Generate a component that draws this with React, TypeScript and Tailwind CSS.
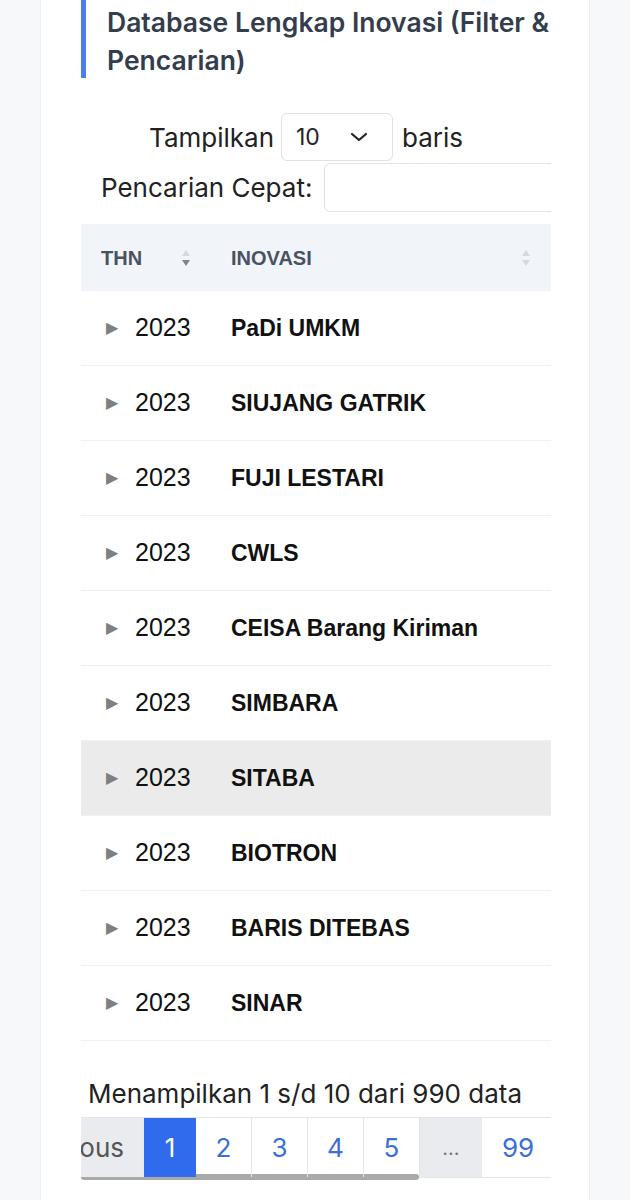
import React from "react";

const rows = [
  "PaDi UMKM",
  "SIUJANG GATRIK",
  "FUJI LESTARI",
  "CWLS",
  "CEISA Barang Kiriman",
  "SIMBARA",
  "SITABA",
  "BIOTRON",
  "BARIS DITEBAS",
  "SINAR",
];

function SortIcon({ active }: { active?: boolean }) {
  return (
    <svg width="10" height="22" viewBox="0 0 10 22">
      <path d="M5 3 L9 9 L1 9 Z" fill="#d5d9e0" />
      <path d="M5 19 L9 13 L1 13 Z" fill={active ? "#7c8594" : "#d5d9e0"} />
    </svg>
  );
}

export default function App() {
  return (
    <div className="min-h-[1200px] w-[630px] bg-[#f7f8fa] overflow-hidden" style={{ fontFamily: "Inter, 'Liberation Sans', sans-serif" }}>
      <div className="mx-[40px] w-[550px] bg-white border-x border-[#eceef2] min-h-[1200px]">
        <div className="ml-[40px] w-[470px] overflow-hidden">
          {/* Heading */}
          <div className="border-l-[5px] border-[#4b7fe2] pl-[21px] pt-[3px] h-[78px]">
            <h2 className="text-[26.5px] leading-[38px] font-semibold text-[#333d4c] whitespace-nowrap w-[470px]">
              Database Lengkap Inovasi (Filter &amp;
              <br />
              Pencarian)
            </h2>
          </div>

          {/* Controls */}
          <div className="mt-[35px] flex items-center pl-[68px] text-[26px] text-[#222]">
            <span>Tampilkan</span>
            <div className="ml-[7px] w-[112px] h-[48px] shrink-0 border border-[#dfe2e6] rounded-[6px] flex items-center justify-between pl-[14px] pr-[24px]">
              <span className="text-[23px]">10</span>
              <svg width="18" height="12" viewBox="0 0 18 12">
                <path d="M2 3 L9 9 L16 3" stroke="#222" strokeWidth="2.2" fill="none" strokeLinecap="round" strokeLinejoin="round" />
              </svg>
            </div>
            <span className="ml-[9px]">baris</span>
          </div>
          <div className="mt-[2px] flex items-center pl-[20px] text-[26px] text-[#222] whitespace-nowrap">
            <span>Pencarian Cepat:</span>
            <div className="ml-[12px] w-[260px] h-[49px] shrink-0 border border-[#dfe2e6] rounded-[6px]" />
          </div>

          {/* Table */}
          <div className="mt-[12px]" style={{ fontFamily: "'Liberation Sans', Arial, sans-serif" }}>
            <div className="h-[67px] bg-[#f1f4f9] flex items-center">
              <div className="w-[150px] pl-[20px] flex items-center">
                <span className="text-[20px] font-bold text-[#4a5262] w-[80px]">THN</span>
                <SortIcon active />
              </div>
              <div className="flex-1 flex items-center justify-between pr-[20px]">
                <span className="text-[20px] font-bold text-[#4a5262]">INOVASI</span>
                <SortIcon />
              </div>
            </div>
            {rows.map((name) => (
              <div
                key={name}
                className={`h-[75px] flex items-center border-b border-[#eef0f3] ${name === "SITABA" ? "bg-[#ebebeb]" : "bg-white"}`}
              >
                <div className="w-[150px] pl-[25px] flex items-center">
                  <span className="text-[16px] text-[#7f7f7f] w-[29px]">▶</span>
                  <span className="text-[25px] text-[#111]">2023</span>
                </div>
                <div className="flex-1 text-[23px] font-bold text-[#111] whitespace-nowrap">{name}</div>
              </div>
            ))}
          </div>

          {/* Info */}
          <div className="mt-[38px] pl-[7px] text-[26px] text-[#222] whitespace-nowrap leading-[30px]">
            Menampilkan 1 s/d 10 dari 990 data
          </div>

          {/* Pagination */}
          <div className="mt-[8px] overflow-hidden">
            <div className="flex h-[61px] border-y border-[#e2e5e9] text-[26px] w-max">
              <div className="w-[63px] overflow-hidden bg-[#e9ebee] text-[#555] flex items-center justify-end pr-[20px] whitespace-nowrap">
                <span className="shrink-0">Previous</span>
              </div>
              <div className="w-[52px] bg-[#2f6bec] text-white flex items-center justify-center">1</div>
              {["2", "3", "4", "5"].map((n) => (
                <div key={n} className="w-[56px] border-r border-[#e2e5e9] text-[#3a6fd8] flex items-center justify-center">{n}</div>
              ))}
              <div className="w-[62px] bg-[#e9ebee] text-[#777] flex items-center justify-center text-[20px]">…</div>
              <div className="w-[72px] text-[#3a6fd8] flex items-center justify-center">99</div>
            </div>
            <div className="mt-[-4px] w-[338px] h-[6px] bg-[#a9a9a9] rounded-full" />
          </div>
        </div>
      </div>
    </div>
  );
}
